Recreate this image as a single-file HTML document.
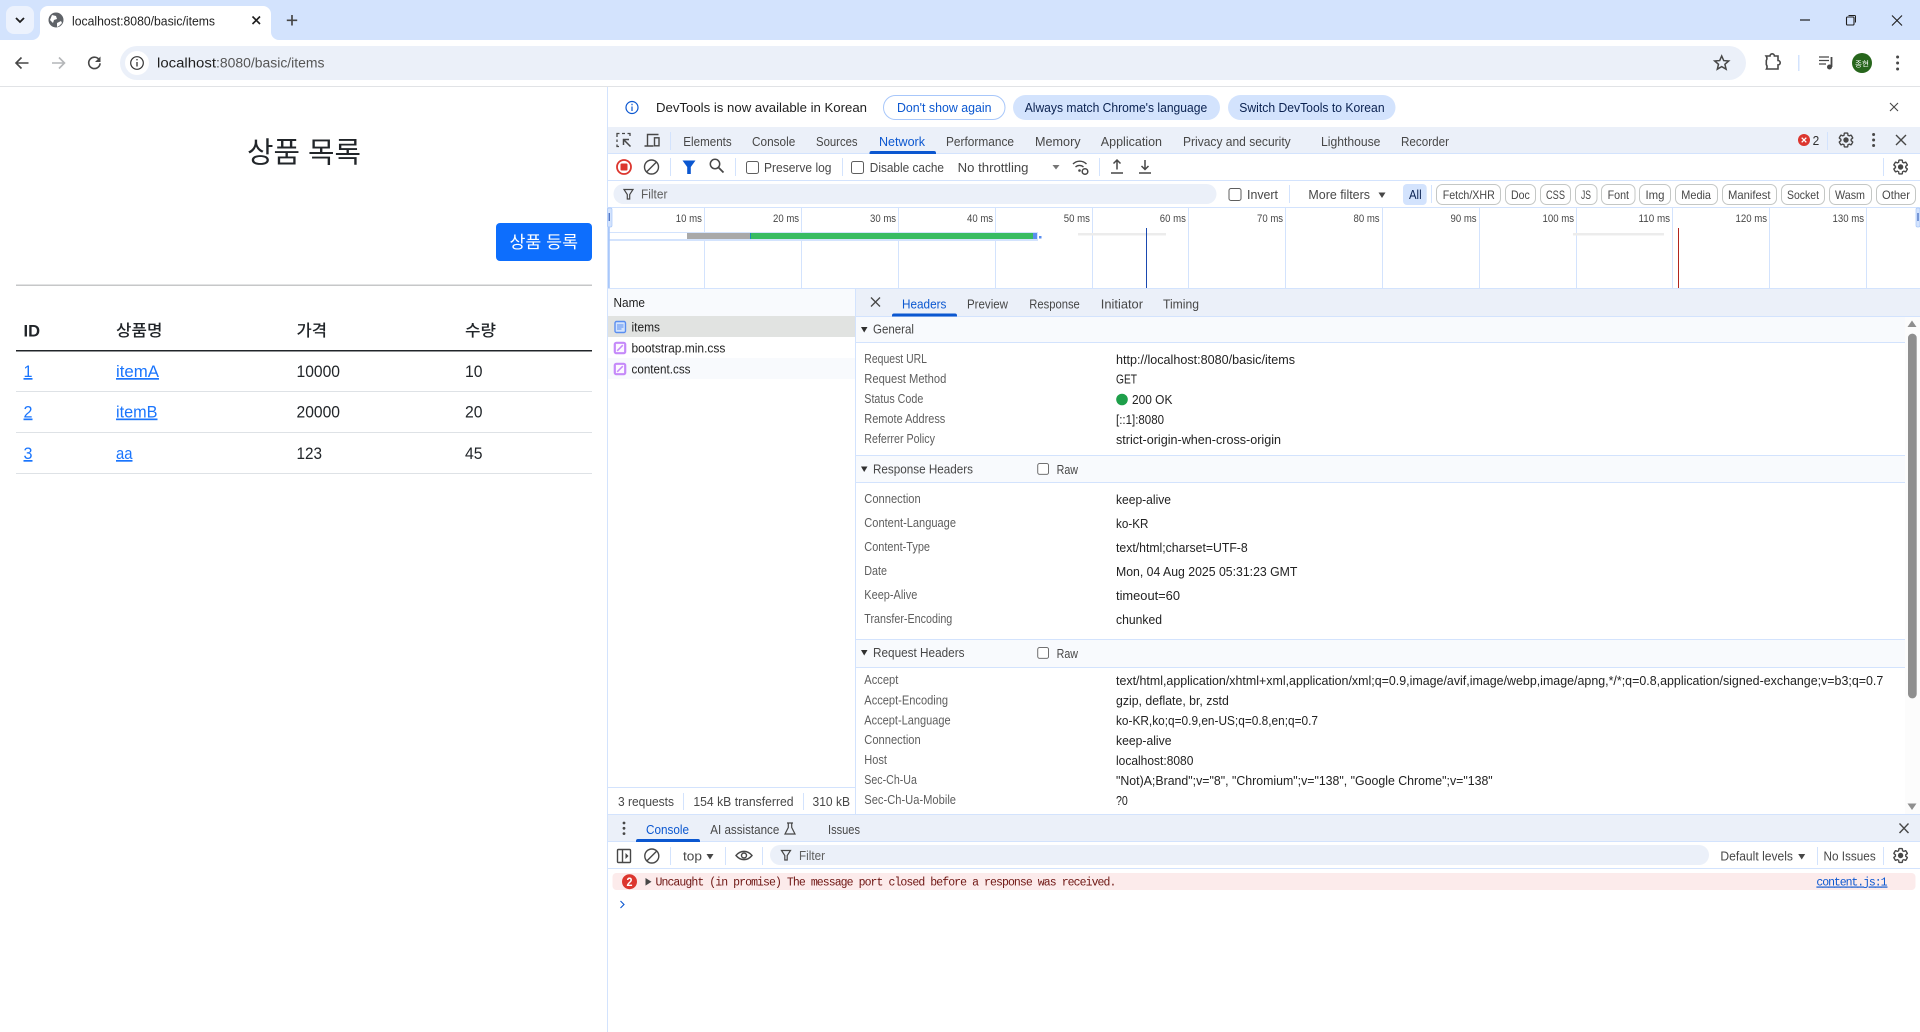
<!DOCTYPE html>
<html lang="ko"><head><meta charset="utf-8"><title>localhost:8080/basic/items</title>
<style>
html,body{margin:0;padding:0;width:1920px;height:1032px;overflow:hidden;background:#fff}
svg{display:block;position:absolute;left:0;top:0;filter:blur(.3px)}
text{font-family:"Liberation Sans","Noto Sans CJK KR",sans-serif;font-size:12.5px;fill:#474747;white-space:pre}
.k{font-family:"Noto Sans CJK KR","Liberation Sans",sans-serif}
.b{fill:#0b57d0}.d{fill:#1f1f1f}.l{fill:#5e5e5e}.v{fill:#222}.m{font-size:11px;fill:#474747}
.p{font-size:17px;fill:#212529}.a{font-size:17px;fill:#1a75fd;text-decoration:underline}
.c{font-family:"Liberation Mono","DejaVu Sans Mono",monospace;font-size:11.5px;fill:#6e1512}
.s{stroke:#474747;fill:none;stroke-width:1.4}
</style></head><body>
<svg width="1920" height="1032" viewBox="0 0 1920 1032" xmlns="http://www.w3.org/2000/svg">
<defs>
<g id="gear"><path transform="scale(.72) translate(-12 -12)" fill="none" stroke="#474747" stroke-width="1.900" d="M19.14 12.94c.04-.3.06-.61.06-.94 0-.32-.02-.64-.07-.94l2.03-1.58c.18-.14.23-.41.12-.61l-1.92-3.32c-.12-.22-.37-.29-.59-.22l-2.39.96c-.5-.38-1.03-.7-1.62-.94l-.36-2.54c-.04-.24-.24-.41-.48-.41h-3.84c-.24 0-.43.17-.47.41l-.36 2.54c-.59.24-1.13.57-1.62.94l-2.39-.96c-.22-.08-.47 0-.59.22L2.74 8.87c-.12.21-.08.47.12.61l2.03 1.58c-.05.3-.09.63-.09.94s.02.64.07.94l-2.03 1.58c-.18.14-.23.41-.12.61l1.92 3.32c.12.22.37.29.59.22l2.39-.96c.5.38 1.03.7 1.62.94l.36 2.54c.05.24.24.41.48.41h3.84c.24 0 .44-.17.47-.41l.36-2.54c.59-.24 1.13-.56 1.62-.94l2.39.96c.22.08.47 0 .59-.22l1.92-3.32c.12-.22.07-.47-.12-.61l-2.01-1.58z"/><circle r="2.700" fill="#474747"/></g>
<g id="clear"><circle r="7" fill="none" stroke="#474747" stroke-width="1.400"/><path d="M-5 5L5-5" stroke="#474747" stroke-width="1.400"/></g>
<path id="funnel" d="M-4.500-4.500H4.500L1.200 0.500V5H-1.200V0.500Z" fill="none" stroke="#474747" stroke-width="1.200"/>
<path id="tri" d="M-3.500-2.500H3.500L0 3Z" fill="#474747"/>
<rect id="cb" width="12" height="12" rx="2" fill="#fff" stroke="#5e5e5e" stroke-width="1"/>
<g id="css"><rect x="-5.200" y="-5.200" width="10.400" height="10.400" rx="1.500" fill="#fdf8ff" stroke="#c58af9" stroke-width="2.200"/><path d="M-2.800 2.800L2.800-2.800" stroke="#c58af9" stroke-width="1.500"/></g>
</defs>

<!-- browser chrome -->
<rect width="1920" height="40" fill="#d3e3fd"/>
<rect x="6" y="6" width="28" height="28" rx="8" fill="#ecf2fd"/>
<path d="M16 18l4 4 4-4" fill="none" stroke="#1f1f1f" stroke-width="1.800"/>
<path d="M32 40a8 8 0 0 0 8-8V14a8 8 0 0 1 8-8H263a8 8 0 0 1 8 8V32a8 8 0 0 0 8 8Z" fill="#fff"/>
<circle cx="56" cy="20" r="7.500" fill="#5f6368"/><path d="M52 15l4 1 1 3-3 1-1 3-3-3zM57 23l4-2 1 2-3 3-2 1z" fill="#fff"/>
<text x="72" y="25.500" textLength="143" lengthAdjust="spacingAndGlyphs" class="d" style="font-size:13px">localhost:8080/basic/items</text>
<path d="M252.500 16.500l7.500 7.500M260 16.500l-7.500 7.500" stroke="#1f1f1f" stroke-width="1.600"/>
<path d="M292 15v10.500M286.800 20.300h10.400" stroke="#474747" stroke-width="1.700"/>
<path d="M1800 20h10" stroke="#1f1f1f" stroke-width="1.200"/>
<rect x="1846.500" y="17" width="7.500" height="8" rx="1" fill="none" stroke="#1f1f1f" stroke-width="1.100"/><path d="M1848.500 15.500h6a1 1 0 0 1 1 1v6" fill="none" stroke="#1f1f1f" stroke-width="1"/>
<path d="M1892 15.500l10 10M1902 15.500l-10 10" stroke="#1f1f1f" stroke-width="1.100"/>

<path d="M0 86V50a10 10 0 0 1 10-10H1910a10 10 0 0 1 10 10V86Z" fill="#fff"/>
<rect y="86" width="1920" height="1" fill="#e1e3e6"/>
<path d="M28.500 63H16M21.500 57.500L16 63l5.500 5.500" fill="none" stroke="#474747" stroke-width="1.600"/>
<path d="M52 63h12.500M59 57.500L64.500 63 59 68.500" fill="none" stroke="#b4b6b8" stroke-width="1.600"/>
<path d="M99.500 60.300a5.700 5.700 0 1 0 .6 3" fill="none" stroke="#474747" stroke-width="1.600"/><path d="M100.500 56.500v5.500h-5.500z" fill="#474747"/>
<rect x="120" y="46" width="1626" height="34" rx="17" fill="#ebf0f9"/>
<circle cx="137" cy="63" r="12" fill="#fff"/>
<circle cx="137" cy="63" r="6.300" fill="none" stroke="#333" stroke-width="1.200"/><path d="M137 62v4.500M137 59v1.400" stroke="#333" stroke-width="1.300"/>
<text x="157" y="67.500" textLength="59" lengthAdjust="spacingAndGlyphs" class="d" style="font-size:13.500px">localhost</text>
<text x="216" y="67.500" textLength="108.500" lengthAdjust="spacingAndGlyphs" style="font-size:13.500px;fill:#555">:8080/basic/items</text>
<path d="M1721.700 56l2 4.600 5 .4-3.800 3.300 1.200 4.900-4.400-2.600-4.400 2.600 1.200-4.900-3.800-3.300 5-.4z" fill="none" stroke="#474747" stroke-width="1.500"/>
<path d="M1766.500 56h3.500a2.200 2.200 0 0 1 4.400 0h3.600v4.500a2.200 2.200 0 0 1 0 4.400V69h-11.500c.8-1.500.8-3-.2-4.500v-4c.9-1.500.9-3-.2-4.500z" fill="none" stroke="#474747" stroke-width="1.600"/>
<rect x="1798" y="55" width="1.500" height="16" fill="#d3e3fd"/>
<path d="M1819 57h10M1819 60.500h10M1819 64h7" stroke="#474747" stroke-width="1.300"/><path d="M1831.500 57v10" stroke="#474747" stroke-width="1.800"/><circle cx="1829.500" cy="67" r="2.500" fill="#474747"/>
<circle cx="1862" cy="63" r="10" fill="#27661c"/>
<text x="1855" y="66.500" textLength="14" lengthAdjust="spacingAndGlyphs" class="k" style="font-size:7.500px;fill:#fff">종현</text>
<circle cx="1897.600" cy="57" r="1.500" fill="#474747"/><circle cx="1897.600" cy="63" r="1.500" fill="#474747"/><circle cx="1897.600" cy="69" r="1.500" fill="#474747"/>

<!-- page -->
<text x="247" y="162.500" textLength="114" lengthAdjust="spacingAndGlyphs" class="k" style="font-size:29px;fill:#212529">상품 목록</text>
<rect x="496" y="223" width="96" height="38" rx="4" fill="#0d6efd"/>
<text x="509.500" y="248" textLength="68.500" lengthAdjust="spacingAndGlyphs" class="k" style="font-size:17px;fill:#fff">상품 등록</text>
<rect x="16" y="284.500" width="576" height="1.500" fill="#c6c7c8"/>
<text x="23.500" y="336.500" textLength="16.500" lengthAdjust="spacingAndGlyphs" style="font-size:17px;font-weight:700;fill:#212529">ID</text>
<text x="116" y="336" textLength="46.500" lengthAdjust="spacingAndGlyphs" class="k" style="font-size:16px;font-weight:500;fill:#212529">상품명</text>
<text x="296.500" y="336" textLength="30.500" lengthAdjust="spacingAndGlyphs" class="k" style="font-size:16px;font-weight:500;fill:#212529">가격</text>
<text x="465" y="336" textLength="31" lengthAdjust="spacingAndGlyphs" class="k" style="font-size:16px;font-weight:500;fill:#212529">수량</text>
<rect x="16" y="350" width="576" height="1.500" fill="#212529"/>
<text x="23.500" y="377" textLength="9" lengthAdjust="spacingAndGlyphs" class="a">1</text>
<text x="116" y="377" textLength="43" lengthAdjust="spacingAndGlyphs" class="a">itemA</text>
<text x="296.500" y="377" textLength="43.500" lengthAdjust="spacingAndGlyphs" class="p">10000</text>
<text x="465" y="377" textLength="17.500" lengthAdjust="spacingAndGlyphs" class="p">10</text>
<rect x="16" y="391" width="576" height="1" fill="#dee2e6"/>
<text x="23.500" y="417.500" textLength="9" lengthAdjust="spacingAndGlyphs" class="a">2</text>
<text x="116" y="417.500" textLength="41.500" lengthAdjust="spacingAndGlyphs" class="a">itemB</text>
<text x="296.500" y="417.500" textLength="43.500" lengthAdjust="spacingAndGlyphs" class="p">20000</text>
<text x="465" y="417.500" textLength="17.500" lengthAdjust="spacingAndGlyphs" class="p">20</text>
<rect x="16" y="432" width="576" height="1" fill="#dee2e6"/>
<text x="23.500" y="459" textLength="9" lengthAdjust="spacingAndGlyphs" class="a">3</text>
<text x="116" y="459" textLength="16.500" lengthAdjust="spacingAndGlyphs" class="a">aa</text>
<text x="296.500" y="459" textLength="25.500" lengthAdjust="spacingAndGlyphs" class="p">123</text>
<text x="465" y="459" textLength="17.500" lengthAdjust="spacingAndGlyphs" class="p">45</text>
<rect x="16" y="473" width="576" height="1" fill="#dee2e6"/>

<!-- devtools frame -->
<rect x="607" y="87" width="1" height="945" fill="#d3e3fd"/>
<!-- banner -->
<circle cx="632" cy="107.500" r="6" fill="none" stroke="#0b57d0" stroke-width="1.200"/><path d="M632 106.500v4.500M632 103.800v1.400" stroke="#0b57d0" stroke-width="1.200"/>
<text x="656" y="112" textLength="211" lengthAdjust="spacingAndGlyphs" class="d">DevTools is now available in Korean</text>
<rect x="883.500" y="95.500" width="121.500" height="24" rx="12" fill="#fff" stroke="#a8c7fa"/>
<text x="897" y="112" textLength="94.500" lengthAdjust="spacingAndGlyphs" class="b">Don't show again</text>
<rect x="1013" y="95" width="207" height="25" rx="12.500" fill="#d3e3fd"/>
<text x="1024.700" y="112" textLength="182.500" lengthAdjust="spacingAndGlyphs" style="fill:#0a2150">Always match Chrome's language</text>
<rect x="1228" y="95" width="167.500" height="25" rx="12.500" fill="#d3e3fd"/>
<text x="1239.300" y="112" textLength="145.300" lengthAdjust="spacingAndGlyphs" style="fill:#0a2150">Switch DevTools to Korean</text>
<path d="M1890 103l8 8M1898 103l-8 8" stroke="#474747" stroke-width="1.100"/>

<!-- main tabs -->
<rect x="608" y="127" width="1312" height="26" fill="#ebf0f9"/>
<rect x="608" y="153" width="1312" height="1" fill="#d3e3fd"/>
<path d="M619 146.500h-2v-2M617 142v-2.500M617 137v-3.500h2.500M622 133.500h3M627.500 133.500h2.500v2.500" fill="none" stroke="#474747" stroke-width="1.300"/>
<path d="M630.500 146.500L624 140M623.500 145v-5.500h5.500" fill="none" stroke="#474747" stroke-width="1.500"/>
<path d="M647.500 145.500V134.500H658.500M644.500 146h9" fill="none" stroke="#474747" stroke-width="1.400"/><rect x="654.500" y="137.800" width="4.500" height="8" fill="none" stroke="#474747" stroke-width="1.400"/>
<rect x="670" y="132" width="1" height="18" fill="#d3e3fd"/>
<text x="683.300" y="146" textLength="48.400" lengthAdjust="spacingAndGlyphs">Elements</text>
<text x="752" y="146" textLength="43.300" lengthAdjust="spacingAndGlyphs">Console</text>
<text x="816" y="146" textLength="41.600" lengthAdjust="spacingAndGlyphs">Sources</text>
<text x="879" y="146" textLength="46" lengthAdjust="spacingAndGlyphs" class="b">Network</text>
<path d="M869.500 154v-1a2 2 0 0 1 2-2H934a2 2 0 0 1 2 2v1z" fill="#0b57d0"/>
<text x="946" y="146" textLength="68" lengthAdjust="spacingAndGlyphs">Performance</text>
<text x="1035" y="146" textLength="45.600" lengthAdjust="spacingAndGlyphs">Memory</text>
<text x="1100.800" y="146" textLength="61.200" lengthAdjust="spacingAndGlyphs">Application</text>
<text x="1183" y="146" textLength="107.700" lengthAdjust="spacingAndGlyphs">Privacy and security</text>
<text x="1321" y="146" textLength="59.400" lengthAdjust="spacingAndGlyphs">Lighthouse</text>
<text x="1401" y="146" textLength="48" lengthAdjust="spacingAndGlyphs">Recorder</text>
<circle cx="1804" cy="140" r="6" fill="#dc362e"/><path d="M1801.700 137.700l4.600 4.600M1806.300 137.700l-4.600 4.600" stroke="#fff" stroke-width="1.300"/>
<text x="1812.600" y="145" textLength="6.600" lengthAdjust="spacingAndGlyphs" style="fill:#303030">2</text>
<rect x="1827" y="132" width="1" height="18" fill="#d3e3fd"/>
<use href="#gear" x="1846" y="140"/>
<circle cx="1873.600" cy="134.500" r="1.500" fill="#474747"/><circle cx="1873.600" cy="140" r="1.500" fill="#474747"/><circle cx="1873.600" cy="145.500" r="1.500" fill="#474747"/>
<path d="M1896 135l10 10M1906 135l-10 10" stroke="#474747" stroke-width="1.400"/>

<!-- network toolbar -->
<rect x="608" y="180" width="1312" height="1" fill="#d3e3fd"/>
<circle cx="624" cy="167" r="7" fill="none" stroke="#dc362e" stroke-width="1.800"/><rect x="620.500" y="163.500" width="7" height="7" rx="1" fill="#dc362e"/>
<use href="#clear" x="651.500" y="167"/>
<rect x="670" y="158" width="1" height="18" fill="#d3e3fd"/>
<path d="M682.500 160.500H695.500L690.800 167V174H687.200V167Z" fill="#0b57d0"/>
<circle cx="715" cy="164" r="4.700" fill="none" stroke="#474747" stroke-width="1.500"/><path d="M718.500 167.500L723.500 172.500" stroke="#474747" stroke-width="1.800"/>
<rect x="735" y="158" width="1" height="18" fill="#d3e3fd"/>
<use href="#cb" x="746.500" y="161.500"/>
<text x="764" y="172" textLength="67.500" lengthAdjust="spacingAndGlyphs">Preserve log</text>
<rect x="842" y="158" width="1" height="18" fill="#d3e3fd"/>
<use href="#cb" x="851.500" y="161.500"/>
<text x="869.800" y="172" textLength="74.200" lengthAdjust="spacingAndGlyphs">Disable cache</text>
<text x="957.700" y="172" textLength="70.800" lengthAdjust="spacingAndGlyphs">No throttling</text>
<path d="M1052.500 165H1059.500L1056 169.500Z" fill="#757575"/>
<path d="M1073 164a9.500 9.500 0 0 1 13.500 0M1075.500 167a6 6 0 0 1 8 0" fill="none" stroke="#474747" stroke-width="1.400"/><circle cx="1079.500" cy="170.500" r="1.300" fill="#474747"/>
<circle cx="1085" cy="171.500" r="2.800" fill="#fff" stroke="#474747" stroke-width="1.500"/>
<rect x="1099" y="158" width="1" height="18" fill="#d3e3fd"/>
<path d="M1117 169.500V160M1113.500 163.500L1117 160l3.500 3.500M1111 173h12" fill="none" stroke="#474747" stroke-width="1.500"/>
<path d="M1145 160v9.500M1141.500 166l3.500 3.500 3.500-3.500M1139 173h12" fill="none" stroke="#474747" stroke-width="1.500"/>
<rect x="1883" y="158" width="1" height="18" fill="#d3e3fd"/>
<use href="#gear" x="1900.600" y="167"/>

<!-- filter bar -->
<rect x="608" y="207" width="1312" height="1" fill="#d3e3fd"/>
<rect x="613.500" y="184" width="603" height="20" rx="10" fill="#ebf0f9"/>
<use href="#funnel" x="628.500" y="194"/>
<text x="641" y="198.500" textLength="26.400" lengthAdjust="spacingAndGlyphs" class="l">Filter</text>
<use href="#cb" x="1229" y="188.500"/>
<text x="1247" y="199" textLength="31" lengthAdjust="spacingAndGlyphs">Invert</text>
<rect x="1289" y="185" width="1" height="18" fill="#d3e3fd"/>
<text x="1308.400" y="199" textLength="61.600" lengthAdjust="spacingAndGlyphs">More filters</text>
<use href="#tri" x="1382" y="195"/>
<rect x="1403" y="184" width="23.700" height="21" rx="4" fill="#d3e3fd"/>
<text x="1409" y="199" textLength="12.600" lengthAdjust="spacingAndGlyphs" style="fill:#0a2150">All</text>
<rect x="1431" y="185" width="1" height="18" fill="#d3e3fd"/>
<g fill="#fff" stroke="#c4c7c5">
<rect x="1436.500" y="184.500" width="64" height="20" rx="6"/><rect x="1505.500" y="184.500" width="30" height="20" rx="6"/><rect x="1540.500" y="184.500" width="30" height="20" rx="6"/><rect x="1575.500" y="184.500" width="21.500" height="20" rx="6"/><rect x="1601.500" y="184.500" width="33.500" height="20" rx="6"/><rect x="1639.500" y="184.500" width="31" height="20" rx="6"/><rect x="1675.500" y="184.500" width="42" height="20" rx="6"/><rect x="1722.500" y="184.500" width="54" height="20" rx="6"/><rect x="1781.500" y="184.500" width="43" height="20" rx="6"/><rect x="1829.500" y="184.500" width="42" height="20" rx="6"/><rect x="1876.500" y="184.500" width="39" height="20" rx="6"/>
</g>
<text x="1442.700" y="199" textLength="52.100" lengthAdjust="spacingAndGlyphs" style="font-size:12px">Fetch/XHR</text>
<text x="1511" y="199" textLength="18.800" lengthAdjust="spacingAndGlyphs" style="font-size:12px">Doc</text>
<text x="1546" y="199" textLength="19" lengthAdjust="spacingAndGlyphs" style="font-size:12px">CSS</text>
<text x="1581" y="199" textLength="10" lengthAdjust="spacingAndGlyphs" style="font-size:12px">JS</text>
<text x="1607.600" y="199" textLength="21.400" lengthAdjust="spacingAndGlyphs" style="font-size:12px">Font</text>
<text x="1645.500" y="199" textLength="19" lengthAdjust="spacingAndGlyphs" style="font-size:12px">Img</text>
<text x="1681.300" y="199" textLength="29.700" lengthAdjust="spacingAndGlyphs" style="font-size:12px">Media</text>
<text x="1728" y="199" textLength="42.500" lengthAdjust="spacingAndGlyphs" style="font-size:12px">Manifest</text>
<text x="1787" y="199" textLength="32" lengthAdjust="spacingAndGlyphs" style="font-size:12px">Socket</text>
<text x="1835" y="199" textLength="30" lengthAdjust="spacingAndGlyphs" style="font-size:12px">Wasm</text>
<text x="1882" y="199" textLength="28" lengthAdjust="spacingAndGlyphs" style="font-size:12px">Other</text>

<!-- timeline -->
<g fill="#d3e3fd">
<rect x="704" y="207" width="1" height="81"/><rect x="801" y="207" width="1" height="81"/><rect x="898" y="207" width="1" height="81"/><rect x="995" y="207" width="1" height="81"/><rect x="1092" y="207" width="1" height="81"/><rect x="1188" y="207" width="1" height="81"/><rect x="1285" y="207" width="1" height="81"/><rect x="1382" y="207" width="1" height="81"/><rect x="1479" y="207" width="1" height="81"/><rect x="1576" y="207" width="1" height="81"/><rect x="1672" y="207" width="1" height="81"/><rect x="1769" y="207" width="1" height="81"/><rect x="1866" y="207" width="1" height="81"/>
<rect x="608" y="232" width="430" height="9"/>
<rect x="608" y="288" width="1312" height="1"/>
</g>
<text x="675.800" y="222" textLength="26.100" lengthAdjust="spacingAndGlyphs" class="m">10 ms</text>
<text x="773" y="222" textLength="26.100" lengthAdjust="spacingAndGlyphs" class="m">20 ms</text>
<text x="870" y="222" textLength="26.100" lengthAdjust="spacingAndGlyphs" class="m">30 ms</text>
<text x="967" y="222" textLength="26.100" lengthAdjust="spacingAndGlyphs" class="m">40 ms</text>
<text x="1063.800" y="222" textLength="26.100" lengthAdjust="spacingAndGlyphs" class="m">50 ms</text>
<text x="1159.800" y="222" textLength="26.100" lengthAdjust="spacingAndGlyphs" class="m">60 ms</text>
<text x="1257" y="222" textLength="26.100" lengthAdjust="spacingAndGlyphs" class="m">70 ms</text>
<text x="1353.500" y="222" textLength="26.100" lengthAdjust="spacingAndGlyphs" class="m">80 ms</text>
<text x="1450.500" y="222" textLength="26.100" lengthAdjust="spacingAndGlyphs" class="m">90 ms</text>
<text x="1542.500" y="222" textLength="31.600" lengthAdjust="spacingAndGlyphs" class="m">100 ms</text>
<text x="1638.500" y="222" textLength="31.600" lengthAdjust="spacingAndGlyphs" class="m">110 ms</text>
<text x="1735.500" y="222" textLength="31.600" lengthAdjust="spacingAndGlyphs" class="m">120 ms</text>
<text x="1832.500" y="222" textLength="31.600" lengthAdjust="spacingAndGlyphs" class="m">130 ms</text>
<rect x="609" y="233" width="78" height="6" fill="#fff"/>
<rect x="687" y="233" width="63" height="6" fill="#a9a9a9"/>
<rect x="750" y="233" width="283" height="6" fill="#38bc62"/>
<rect x="750" y="233" width="1" height="6" fill="#1a8db5"/>
<rect x="1033" y="233" width="4" height="6" fill="#5a8ef0"/>
<rect x="1039" y="236" width="2.500" height="2.500" fill="#5a8ef0"/>
<rect x="1078" y="233" width="88" height="2.500" fill="#ececec"/>
<rect x="1573" y="233" width="91" height="2.500" fill="#ececec"/>
<rect x="1146" y="228" width="1" height="60" fill="#1a49b0"/>
<rect x="1678" y="228" width="1" height="60" fill="#b3261e"/>
<rect x="608" y="208" width="1.800" height="80" fill="#a8c7fa"/>
<rect x="607.500" y="208" width="4.500" height="19" rx="1.500" fill="#d3e3fd" stroke="#a8c7fa" stroke-width=".7"/>
<rect x="608.700" y="213" width="1" height="8" fill="#1a49b0"/>
<rect x="1916" y="208" width="4" height="19" rx="1.500" fill="#d3e3fd" stroke="#a8c7fa" stroke-width=".7"/>
<rect x="1917.500" y="213" width="1" height="8" fill="#1a49b0"/>

<!-- name column -->
<rect x="608" y="289" width="247" height="27" fill="#f8fafd"/>
<rect x="608" y="316" width="247" height="1" fill="#d3e3fd"/>
<text x="613.500" y="307" textLength="31.500" lengthAdjust="spacingAndGlyphs" class="d">Name</text>
<rect x="608" y="316" width="247" height="21" fill="#e1e3e1"/>
<rect x="608" y="358" width="247" height="21" fill="#f8fafd"/>
<rect x="615" y="321.500" width="10.500" height="11" rx="1.500" fill="#d3e3fd" stroke="#5a8ef0" stroke-width="1.400"/><path d="M617 325h6.500M617 327h6.500M617 329h4.500" stroke="#5a8ef0"/>
<text x="631.500" y="331.500" textLength="28.500" lengthAdjust="spacingAndGlyphs" class="d">items</text>
<use href="#css" x="620" y="348"/>
<text x="631.500" y="352.500" textLength="93.900" lengthAdjust="spacingAndGlyphs" class="d">bootstrap.min.css</text>
<use href="#css" x="620" y="369"/>
<text x="631.500" y="373.500" textLength="59" lengthAdjust="spacingAndGlyphs" class="d">content.css</text>
<rect x="608" y="787" width="247" height="1" fill="#d3e3fd"/>
<text x="618" y="806" textLength="56" lengthAdjust="spacingAndGlyphs">3 requests</text>
<rect x="683" y="793" width="1" height="17" fill="#d3e3fd"/>
<text x="693.400" y="806" textLength="100.200" lengthAdjust="spacingAndGlyphs">154 kB transferred</text>
<rect x="803" y="793" width="1" height="17" fill="#d3e3fd"/>
<text x="812.500" y="806" textLength="37.500" lengthAdjust="spacingAndGlyphs">310 kB</text>
<rect x="855" y="289" width="1" height="525" fill="#d3e3fd"/>

<!-- detail tabs -->
<rect x="856" y="289" width="1064" height="27" fill="#ebf0f9"/>
<rect x="856" y="316" width="1064" height="1" fill="#d3e3fd"/>
<path d="M871 297.500l9 9M880 297.500l-9 9" stroke="#474747" stroke-width="1.300"/>
<text x="902" y="308.500" textLength="44.400" lengthAdjust="spacingAndGlyphs" class="b">Headers</text>
<path d="M892 316.500v-1a2 2 0 0 1 2-2H955a2 2 0 0 1 2 2v1z" fill="#0b57d0"/>
<text x="967" y="308.500" textLength="41" lengthAdjust="spacingAndGlyphs">Preview</text>
<text x="1029.300" y="308.500" textLength="50.500" lengthAdjust="spacingAndGlyphs">Response</text>
<text x="1100.800" y="308.500" textLength="42.200" lengthAdjust="spacingAndGlyphs">Initiator</text>
<text x="1163" y="308.500" textLength="36" lengthAdjust="spacingAndGlyphs">Timing</text>

<!-- headers sections -->
<rect x="856" y="317" width="1049" height="25" fill="#f8fafd"/>
<rect x="856" y="342" width="1049" height="1" fill="#d3e3fd"/>
<path d="M861 327H867.500L864.200 332.500Z" fill="#303030"/>
<text x="873" y="333.500" textLength="41" lengthAdjust="spacingAndGlyphs">General</text>
<text x="864.300" y="363" textLength="62.700" lengthAdjust="spacingAndGlyphs" class="l">Request URL</text>
<text x="864.300" y="383" textLength="82" lengthAdjust="spacingAndGlyphs" class="l">Request Method</text>
<text x="864.300" y="403" textLength="59" lengthAdjust="spacingAndGlyphs" class="l">Status Code</text>
<text x="864.300" y="423" textLength="81" lengthAdjust="spacingAndGlyphs" class="l">Remote Address</text>
<text x="864.300" y="443" textLength="70.700" lengthAdjust="spacingAndGlyphs" class="l">Referrer Policy</text>
<text x="1116" y="364" textLength="179" lengthAdjust="spacingAndGlyphs" class="v">http://localhost:8080/basic/items</text>
<text x="1116" y="383.500" textLength="21" lengthAdjust="spacingAndGlyphs" class="v">GET</text>
<circle cx="1122" cy="399.500" r="5.800" fill="#1e9f4a"/>
<text x="1132" y="404" textLength="40.400" lengthAdjust="spacingAndGlyphs" class="v">200 OK</text>
<text x="1116" y="424" textLength="48" lengthAdjust="spacingAndGlyphs" class="v">[::1]:8080</text>
<text x="1116" y="444" textLength="165" lengthAdjust="spacingAndGlyphs" class="v">strict-origin-when-cross-origin</text>

<rect x="856" y="455" width="1049" height="1" fill="#d3e3fd"/>
<rect x="856" y="456" width="1049" height="26" fill="#f8fafd"/>
<rect x="856" y="482" width="1049" height="1" fill="#d3e3fd"/>
<path d="M861 466.500H867.500L864.200 472Z" fill="#303030"/>
<text x="873" y="473.500" textLength="100" lengthAdjust="spacingAndGlyphs">Response Headers</text>
<use href="#cb" x="1037.500" y="463.500" transform="translate(104 46.400) scale(.9)"/>
<text x="1056.600" y="474" textLength="21.400" lengthAdjust="spacingAndGlyphs">Raw</text>
<text x="864.300" y="503" textLength="56.400" lengthAdjust="spacingAndGlyphs" class="l">Connection</text>
<text x="864.300" y="527" textLength="91.700" lengthAdjust="spacingAndGlyphs" class="l">Content-Language</text>
<text x="864.300" y="551" textLength="65.700" lengthAdjust="spacingAndGlyphs" class="l">Content-Type</text>
<text x="864.300" y="575" textLength="22.700" lengthAdjust="spacingAndGlyphs" class="l">Date</text>
<text x="864.300" y="599" textLength="53" lengthAdjust="spacingAndGlyphs" class="l">Keep-Alive</text>
<text x="864.300" y="623" textLength="88" lengthAdjust="spacingAndGlyphs" class="l">Transfer-Encoding</text>
<text x="1116" y="504" textLength="55" lengthAdjust="spacingAndGlyphs" class="v">keep-alive</text>
<text x="1116" y="528" textLength="32.400" lengthAdjust="spacingAndGlyphs" class="v">ko-KR</text>
<text x="1116" y="552" textLength="131.700" lengthAdjust="spacingAndGlyphs" class="v">text/html;charset=UTF-8</text>
<text x="1116" y="576" textLength="181.400" lengthAdjust="spacingAndGlyphs" class="v">Mon, 04 Aug 2025 05:31:23 GMT</text>
<text x="1116" y="600" textLength="64" lengthAdjust="spacingAndGlyphs" class="v">timeout=60</text>
<text x="1116" y="624" textLength="46" lengthAdjust="spacingAndGlyphs" class="v">chunked</text>

<rect x="856" y="639" width="1049" height="1" fill="#d3e3fd"/>
<rect x="856" y="640" width="1049" height="27" fill="#f8fafd"/>
<rect x="856" y="667" width="1049" height="1" fill="#d3e3fd"/>
<path d="M861 650H867.500L864.200 655.500Z" fill="#303030"/>
<text x="873" y="657" textLength="91.500" lengthAdjust="spacingAndGlyphs">Request Headers</text>
<use href="#cb" x="1037.500" y="647.500" transform="translate(104 64.800) scale(.9)"/>
<text x="1056.600" y="658" textLength="21.400" lengthAdjust="spacingAndGlyphs">Raw</text>
<text x="864.300" y="684" textLength="34" lengthAdjust="spacingAndGlyphs" class="l">Accept</text>
<text x="864.300" y="704.500" textLength="83.800" lengthAdjust="spacingAndGlyphs" class="l">Accept-Encoding</text>
<text x="864.300" y="724.500" textLength="86.300" lengthAdjust="spacingAndGlyphs" class="l">Accept-Language</text>
<text x="864.300" y="744" textLength="56.400" lengthAdjust="spacingAndGlyphs" class="l">Connection</text>
<text x="864.300" y="764" textLength="22.700" lengthAdjust="spacingAndGlyphs" class="l">Host</text>
<text x="864.300" y="784" textLength="52.600" lengthAdjust="spacingAndGlyphs" class="l">Sec-Ch-Ua</text>
<text x="864.300" y="804" textLength="91.700" lengthAdjust="spacingAndGlyphs" class="l">Sec-Ch-Ua-Mobile</text>
<text x="1116" y="685" textLength="767.300" lengthAdjust="spacingAndGlyphs" class="v">text/html,application/xhtml+xml,application/xml;q=0.9,image/avif,image/webp,image/apng,*/*;q=0.8,application/signed-exchange;v=b3;q=0.7</text>
<text x="1116" y="705" textLength="112.800" lengthAdjust="spacingAndGlyphs" class="v">gzip, deflate, br, zstd</text>
<text x="1116" y="725" textLength="202" lengthAdjust="spacingAndGlyphs" class="v">ko-KR,ko;q=0.9,en-US;q=0.8,en;q=0.7</text>
<text x="1116" y="745" textLength="55.500" lengthAdjust="spacingAndGlyphs" class="v">keep-alive</text>
<text x="1116" y="765" textLength="77.400" lengthAdjust="spacingAndGlyphs" class="v">localhost:8080</text>
<text x="1116" y="785" textLength="376.700" lengthAdjust="spacingAndGlyphs" class="v">"Not)A;Brand";v="8", "Chromium";v="138", "Google Chrome";v="138"</text>
<text x="1116" y="805" textLength="11.800" lengthAdjust="spacingAndGlyphs" class="v">?0</text>

<!-- scrollbar -->
<rect x="1905" y="317" width="15" height="497" fill="#fcfcfc"/>
<path d="M1912 320.500l4.500 6.500h-9z" fill="#8f8f8f"/>
<path d="M1908 338a4.300 4.300 0 0 1 8.700 0V694a4.300 4.300 0 0 1-8.700 0Z" fill="#8f8f8f"/>
<path d="M1912 810l-4.500-6.500h9z" fill="#8f8f8f"/>

<!-- drawer -->
<rect x="608" y="814" width="1312" height="27" fill="#ebf0f9"/>
<rect x="608" y="814" width="1312" height="1" fill="#d3e3fd"/>
<rect x="608" y="841" width="1312" height="1" fill="#d3e3fd"/>
<rect x="608" y="868" width="1312" height="1" fill="#d3e3fd"/>
<circle cx="624" cy="823" r="1.400" fill="#474747"/><circle cx="624" cy="828.300" r="1.400" fill="#474747"/><circle cx="624" cy="833.600" r="1.400" fill="#474747"/>
<text x="646" y="834" textLength="43" lengthAdjust="spacingAndGlyphs" class="b">Console</text>
<path d="M636 842v-1a2 2 0 0 1 2-2H698a2 2 0 0 1 2 2v1z" fill="#0b57d0"/>
<text x="710.300" y="834" textLength="69" lengthAdjust="spacingAndGlyphs">AI assistance</text>
<path d="M787 823h6M788.300 823v4.500L785 834h10l-3.300-6.500V823" fill="none" stroke="#474747" stroke-width="1.200"/>
<text x="828" y="834" textLength="32" lengthAdjust="spacingAndGlyphs">Issues</text>
<path d="M1899.500 823.500l9 9.500M1908.500 823.500l-9 9.500" stroke="#474747" stroke-width="1.400"/>

<rect x="617.500" y="849.500" width="13" height="13" rx="1" fill="none" stroke="#474747" stroke-width="1.400"/><path d="M622.500 849.500v13" stroke="#474747" stroke-width="1.400"/><path d="M625.500 853l3 3-3 3z" fill="#474747"/>
<use href="#clear" x="651.800" y="856"/>
<rect x="670" y="847" width="1" height="18" fill="#d3e3fd"/>
<text x="683" y="860.500" textLength="19" lengthAdjust="spacingAndGlyphs">top</text>
<use href="#tri" x="710" y="856.500"/>
<rect x="725" y="847" width="1" height="18" fill="#d3e3fd"/>
<path d="M736 855.500c4.500-5.500 11.500-5.500 16 0c-4.500 5.500-11.500 5.500-16 0Z" fill="none" stroke="#474747" stroke-width="1.400"/><circle cx="744" cy="855.500" r="2.500" fill="none" stroke="#474747" stroke-width="1.400"/>
<rect x="762" y="847" width="1" height="18" fill="#d3e3fd"/>
<rect x="770" y="845" width="939" height="20" rx="10" fill="#ebf0f9"/>
<use href="#funnel" x="786" y="855"/>
<text x="799" y="860" textLength="26" lengthAdjust="spacingAndGlyphs" class="l">Filter</text>
<text x="1720.400" y="860.500" textLength="72.600" lengthAdjust="spacingAndGlyphs">Default levels</text>
<use href="#tri" x="1801.700" y="856.500"/>
<rect x="1817" y="847" width="1" height="18" fill="#d3e3fd"/>
<text x="1823.500" y="860.500" textLength="52.200" lengthAdjust="spacingAndGlyphs">No Issues</text>
<rect x="1883" y="847" width="1" height="18" fill="#d3e3fd"/>
<use href="#gear" x="1900.600" y="855.500"/>

<rect x="612.500" y="873" width="1303" height="17" rx="4" fill="#fcebeb"/>
<circle cx="629.500" cy="881.700" r="7.500" fill="#dc362e"/>
<text x="626.500" y="886" textLength="6" lengthAdjust="spacingAndGlyphs" style="font-size:11.500px;font-weight:700;fill:#fff">2</text>
<path d="M645.500 878l6 3.800-6 3.800z" fill="#474747"/>
<text x="655.500" y="885.500" textLength="460.900" lengthAdjust="spacing" class="c">Uncaught (in promise) The message port closed before a response was received.</text>
<text x="1816.400" y="885.500" textLength="71.100" lengthAdjust="spacing" class="c" style="fill:#0b57d0;text-decoration:underline">content.js:1</text>
<path d="M620.500 901l3.500 3.500-3.500 3.500" fill="none" stroke="#0b57d0" stroke-width="1.100"/>
</svg>
</body></html>
